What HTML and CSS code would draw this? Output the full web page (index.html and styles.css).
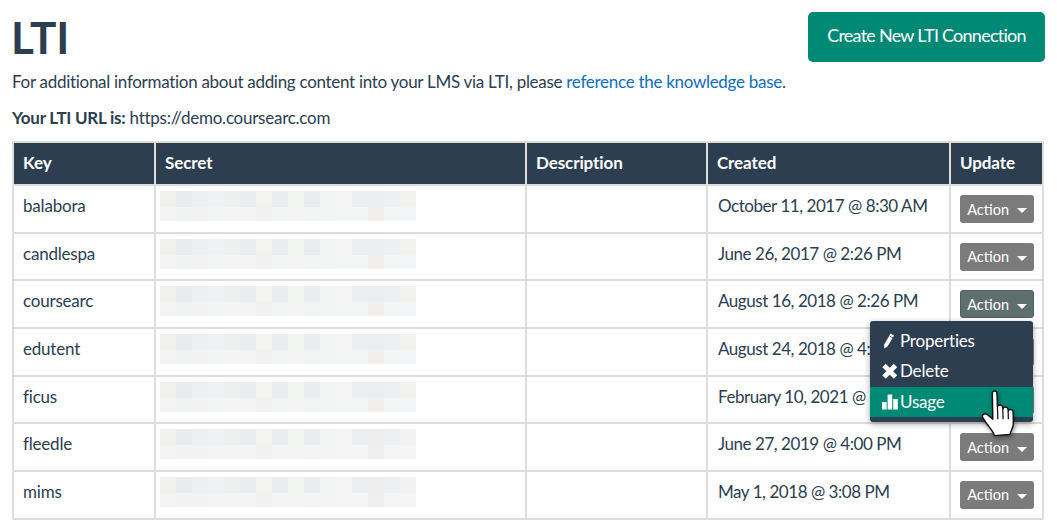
FILE: index.html
```html
<!DOCTYPE html>
<html>
<head>
    <title>LTI</title>
    <link rel="stylesheet" href="styles.css">
</head>
<body>
    <div class="page-head">
        <h1>LTI</h1>
        <a class="btn-create" href="#">Create New LTI Connection</a>
    </div>
    <p class="info">For additional information about adding content into your LMS via LTI, please <a href="#">reference the knowledge base</a>.</p>
    <p class="info url"><strong>Your LTI URL is:</strong> https://demo.coursearc.com</p>

    <table class="lti-table">
        <thead>
            <tr>
                <th class="col-key">Key</th>
                <th class="col-secret">Secret</th>
                <th class="col-desc">Description</th>
                <th class="col-created">Created</th>
                <th>Update</th>
            </tr>
        </thead>
        <tbody>
            <tr>
                <td>balabora</td>
                <td class="secret"><div class="blur"></div></td>
                <td></td>
                <td class="date">October 11, 2017 @ 8:30 AM</td>
                <td class="update"><button class="btn-action">Action <span class="caret"></span></button></td>
            </tr>
            <tr>
                <td>candlespa</td>
                <td class="secret"><div class="blur"></div></td>
                <td></td>
                <td class="date">June 26, 2017 @ 2:26 PM</td>
                <td class="update"><button class="btn-action">Action <span class="caret"></span></button></td>
            </tr>
            <tr>
                <td>coursearc</td>
                <td class="secret"><div class="blur"></div></td>
                <td></td>
                <td class="date">August 16, 2018 @ 2:26 PM</td>
                <td class="update">
                    <div class="dropdown">
                        <button class="btn-action open">Action <span class="caret"></span></button>
                        <ul class="menu">
                            <li>
                                <svg class="ico" viewBox="0 0 16 16"><path d="M8.5 0.5 L12 2.5 L5.5 13.5 L2 15.5 L2.2 11.5 Z" fill="#fff"/><path d="M7.6 3 L11 5" stroke="#2c3e50" stroke-width="0.8" fill="none"/></svg>Properties
                            </li>
                            <li>
                                <svg class="ico" viewBox="0 0 16 16"><path d="M2 2.5 L13.5 14 M13.5 2.5 L2 14" stroke="#fff" stroke-width="4.8" fill="none"/></svg>Delete
                            </li>
                            <li class="active">
                                <svg class="ico" viewBox="0 0 16 16"><path d="M0 8h4.6v7.5H0z M5.6 0.5h4.6v15H5.6z M11.2 5h4.6v10.5h-4.6z" fill="#fff"/></svg>Usage
                            </li>
                        </ul>
                        <svg class="hand" viewBox="0 0 36 46">
                            <path d="M11 3.5 C11 1 15.5 1 15.5 3.5 L16 17 C16.5 14.5 20.5 14.5 21 17 L21.3 19 C22 16.5 26 16.8 26.3 19.5 L26.5 21 C27.5 18.8 31.2 19.4 31.2 22 L31.5 33 C31.5 38 29 40 28 44 L13 45 C12 41 9 38 6 34 L2 28 C0 25 3.5 22.5 6 24.5 L11.5 29 Z" fill="#fff" stroke="#111" stroke-width="1.4" stroke-linejoin="round"/>
                            <path d="M16 17 L16.4 29 M21.2 19 L21.5 29 M26.4 21 L26.6 29" stroke="#111" stroke-width="1.2" fill="none"/>
                        </svg>
                    </div>
                </td>
            </tr>
            <tr>
                <td>edutent</td>
                <td class="secret"><div class="blur"></div></td>
                <td></td>
                <td class="date">August 24, 2018 @ 4:00 PM</td>
                <td class="update"><button class="btn-action">Action <span class="caret"></span></button></td>
            </tr>
            <tr>
                <td>ficus</td>
                <td class="secret"><div class="blur"></div></td>
                <td></td>
                <td class="date">February 10, 2021 @ 1:15 PM</td>
                <td class="update"><button class="btn-action">Action <span class="caret"></span></button></td>
            </tr>
            <tr>
                <td>fleedle</td>
                <td class="secret"><div class="blur"></div></td>
                <td></td>
                <td class="date">June 27, 2019 @ 4:00 PM</td>
                <td class="update"><button class="btn-action">Action <span class="caret"></span></button></td>
            </tr>
            <tr>
                <td>mims</td>
                <td class="secret"><div class="blur"></div></td>
                <td></td>
                <td class="date">May 1, 2018 @ 3:08 PM</td>
                <td class="update"><button class="btn-action">Action <span class="caret"></span></button></td>
            </tr>
        </tbody>
    </table>
</body>
</html>
```

FILE: styles.css
```css
html, body {
    height: 532px;
    overflow: hidden;
}

body {
    font-family: Lato, "Liberation Sans", sans-serif;
    font-size: 17px;
    letter-spacing: -0.29px;
    line-height: 1.4;
    color: #2c3e50;
    background-color: #fff;
    margin: 0;
    padding: 12px 12px 0 12px;
}

.page-head {
    display: flex;
    justify-content: space-between;
    align-items: flex-start;
    height: 50px;
}

h1 {
    font-size: 44px;
    font-weight: 700;
    line-height: 50px;
    letter-spacing: 0;
    margin: 0 0 0 -1px;
}

.btn-create {
    display: block;
    width: 237px;
    height: 50px;
    line-height: 47px;
    text-align: center;
    font-size: 18px;
    letter-spacing: -0.75px;
    color: #fff;
    background-color: #008975;
    border-radius: 5px;
    text-decoration: none;
}

.info {
    margin: 9px 0 0 0;
    line-height: 22px;
}

.info.url {
    margin-top: 14px;
    letter-spacing: -0.25px;
}

.info a {
    color: #0f6cbf;
    text-decoration: none;
}

.lti-table {
    border-collapse: collapse;
    table-layout: fixed;
    width: 1032px;
    margin-top: 12px;
}

.lti-table th, .lti-table td {
    border: 2px solid #ddd;
    padding: 0 9px;
    text-align: left;
    vertical-align: top;
}

.lti-table th {
    background-color: #2c3e50;
    color: #fff;
    font-weight: 700;
    letter-spacing: -0.1px;
    height: 39px;
    line-height: 38px;
    padding-bottom: 2px;
    vertical-align: middle;
}

.lti-table td {
    height: 47.67px;
    box-sizing: border-box;
    padding-top: 9px;
    line-height: 22px;
    letter-spacing: -0.2px;
}

.lti-table td.date {
    letter-spacing: -0.45px;
    padding-left: 10px;
}

.col-key { width: 122px; }
.col-secret { width: 351px; }
.col-desc { width: 161px; }
.col-created { width: 223px; }

.lti-table td.secret {
    padding: 5px 0 0 4px;
}

.blur {
    width: 256px;
    height: 30px;
    background-repeat: no-repeat;
    background-size: 256px 16px, 256px 14px;
    background-position: 0 0, 0 16px;
    background-image:
        linear-gradient(90deg, #f0f0ee 0 16px, #eaebed 0 32px, #eeeff1 0 48px, #f0f1f3 0 64px, #eef0ef 0 80px, #ebecee 0 96px, #f3f3f0 0 112px, #ebecee 0 128px, #f2f4f2 0 144px, #ebecee 0 160px, #f2f4f3 0 176px, #f5f5f5 0 192px, #ecedef 0 224px, #eeeff1 0 240px, #f2f2f0 0 256px),
        linear-gradient(90deg, #f3f3f3 0 16px, #f1f3f2 0 32px, #f2f2f2 0 48px, #f3f4f4 0 64px, #f4f4f4 0 96px, #f1f1f1 0 112px, #f3f5f4 0 128px, #f3f4f3 0 144px, #f2f3f3 0 160px, #f3f5f4 0 176px, #f4f5f5 0 208px, #f0efed 0 224px, #f4f6f5 0 240px, #f4f5f7 0 256px);
}

.lti-table td.update {
    padding: 9px 0 0 9px;
    overflow: visible;
}

.dropdown {
    position: relative;
}

.btn-action {
    display: block;
    width: 74px;
    height: 28px;
    padding: 0;
    border: none;
    border-radius: 3px;
    background-color: #7b7b7b;
    color: #fff;
    font-family: inherit;
    font-size: 14.5px;
    cursor: pointer;
}

.btn-action.open {
    background-color: #5f6f6e;
    border: 1px solid #4f5f5e;
}

.caret {
    display: inline-block;
    width: 0;
    height: 0;
    margin-left: 4px;
    vertical-align: middle;
    border-left: 5px solid transparent;
    border-right: 5px solid transparent;
    border-top: 5px solid #fff;
}

.menu {
    position: absolute;
    top: 31px;
    left: -90px;
    width: 163px;
    box-sizing: border-box;
    margin: 0;
    padding: 5px 0 5px 0;
    list-style: none;
    background-color: #2c3e50;
    border-radius: 3px;
    box-shadow: 0 2px 6px rgba(0, 0, 0, 0.35);
    color: #fff;
}

.menu li {
    display: flex;
    align-items: center;
    height: 30px;
    padding-left: 12px;
}

.menu li.active {
    margin-top: 1px;
    background-color: #008975;
}

.ico {
    width: 16px;
    height: 16px;
    margin-right: 2px;
    flex: none;
}

.hand {
    position: absolute;
    top: 99px;
    left: 21px;
    width: 37px;
    height: 48px;
    filter: drop-shadow(1px 2px 2px rgba(0, 0, 0, 0.4));
}
```
